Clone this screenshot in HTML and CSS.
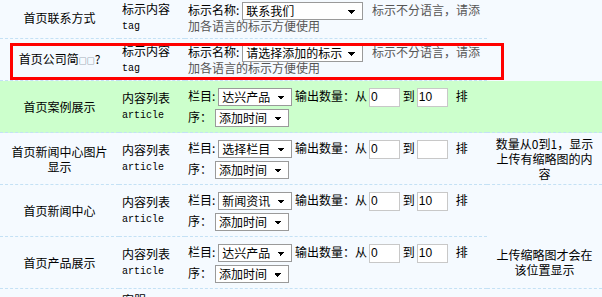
FILE: index.html
```html
<!DOCTYPE html>
<html>
<head>
    <title>首页模块设置</title>
    <link rel="stylesheet" href="styles.css">
</head>
<body>
    <table class="list">
        <colgroup>
            <col class="c-name">
            <col class="c-type">
            <col class="c-field">
            <col class="c-note">
        </colgroup>
        <tr class="short">
            <td class="name">首页联系方式</td>
            <td class="type">标示内容<br><span class="code">tag</span></td>
            <td class="field">标示名称:<select class="sel-wide"><option>联系我们</option></select> <span class="tip">标示不分语言，请添加各语言的标示方便使用</span></td>
        </tr>
        <tr class="short">
            <td class="name">首页公司简<span class="tofu">□□</span>?</td>
            <td class="type">标示内容<br><span class="code">tag</span></td>
            <td class="field">标示名称:<select class="sel-wide"><option>请选择添加的标示</option></select> <span class="tip">标示不分语言，请添加各语言的标示方便使用</span></td>
        </tr>
        <tr class="tall on">
            <td class="name">首页案例展示</td>
            <td class="type">内容列表<br><span class="code">article</span></td>
            <td class="field">栏目:<select class="sel"><option>达兴产品</option></select> 输出数量：从<input class="num" value="0"> 到<input class="num" value="10">&nbsp;&nbsp;&nbsp;排序：<select class="sel"><option>添加时间</option></select></td>
            <td class="note"></td>
        </tr>
        <tr class="tall">
            <td class="name">首页新闻中心图片显示</td>
            <td class="type">内容列表<br><span class="code">article</span></td>
            <td class="field">栏目:<select class="sel"><option>选择栏目</option></select> 输出数量：从<input class="num" value="0"> 到<input class="num" value="">&nbsp;&nbsp;&nbsp;排序：<select class="sel"><option>添加时间</option></select></td>
            <td class="note">数量从0到1，显示上传有缩略图的内容</td>
        </tr>
        <tr class="tall">
            <td class="name">首页新闻中心</td>
            <td class="type">内容列表<br><span class="code">article</span></td>
            <td class="field">栏目:<select class="sel"><option>新闻资讯</option></select> 输出数量：从<input class="num" value="0"> 到<input class="num" value="10">&nbsp;&nbsp;&nbsp;排序：<select class="sel"><option>添加时间</option></select></td>
        </tr>
        <tr class="tall">
            <td class="name">首页产品展示</td>
            <td class="type">内容列表<br><span class="code">article</span></td>
            <td class="field">栏目:<select class="sel"><option>达兴产品</option></select> 输出数量：从<input class="num" value="0"> 到<input class="num" value="10">&nbsp;&nbsp;&nbsp;排序：<select class="sel"><option>添加时间</option></select></td>
            <td class="note">上传缩略图才会在该位置显示</td>
        </tr>
        <tr class="more">
            <td class="name"></td>
            <td class="type">客服</td>
            <td class="field"></td>
            <td class="note"></td>
        </tr>
    </table>
    <div class="mark"></div>
</body>
</html>
```

FILE: styles.css
```css
body {
    margin: 0;
    background-color: #f5faff;
    font-family: "Noto Sans CJK SC", "Liberation Sans", sans-serif;
    font-size: 12px;
    color: #000;
    overflow: hidden;
}
.list {
    width: 602px;
    margin-top: -3px;
    border-collapse: collapse;
    table-layout: fixed;
}
.c-name { width: 119px; }
.c-type { width: 66px; }
.c-field { width: 302px; }
.c-note { width: 115px; }
.list td {
    padding: 0 3px;
    line-height: 15px;
    vertical-align: middle;
    border-bottom: 1px dashed #c4e1f5;
}
.short td {
    height: 41px;
}
.tall td {
    height: 51px;
}
.on td {
    background-color: #ccffcc;
}
.more td {
    height: 40px;
    vertical-align: top;
    padding-top: 3px;
    border-bottom: none;
}
.list .name {
    padding: 0 8px;
    text-align: center;
}
.code {
    font-family: "Liberation Mono", monospace;
    font-size: 10px;
}
.tofu {
    font-size: 8px;
    color: #3a4a6a;
}
.tall .field {
    line-height: 19px;
}
.tip {
    margin-left: 6px;
    color: #555;
}
.list .note {
    padding: 0 5px;
    text-align: center;
}
select {
    -webkit-appearance: none;
    appearance: none;
    box-sizing: border-box;
    height: 18px;
    margin: 0 0 0 3px;
    padding: 0 0 0 3px;
    border: 1px solid #9a9a9a;
    border-radius: 0;
    background-color: #fff;
    background-image: linear-gradient(45deg, transparent 50%, #000 50%), linear-gradient(135deg, #000 50%, transparent 50%);
    background-position: right 10px top 7px, right 6px top 7px;
    background-size: 4px 4px;
    background-repeat: no-repeat;
    font-family: "Noto Sans CJK SC", sans-serif;
    font-size: 12px;
    line-height: 16px;
    color: #000;
    vertical-align: middle;
}
.short select {
    margin-top: -2px;
    margin-bottom: -2px;
}
.sel {
    width: 74px;
}
.sel-wide {
    width: 121px;
}
.num {
    box-sizing: border-box;
    width: 31px;
    height: 19px;
    margin: 0 0 0 2px;
    padding: 0 1px;
    border: 1px solid #c8c8c8;
    background-color: #fff;
    font-family: "Liberation Sans", sans-serif;
    font-size: 12px;
    vertical-align: middle;
}
.mark {
    position: absolute;
    left: 10px;
    top: 43px;
    width: 488px;
    height: 31px;
    border: 3px solid #f00;
}
```
